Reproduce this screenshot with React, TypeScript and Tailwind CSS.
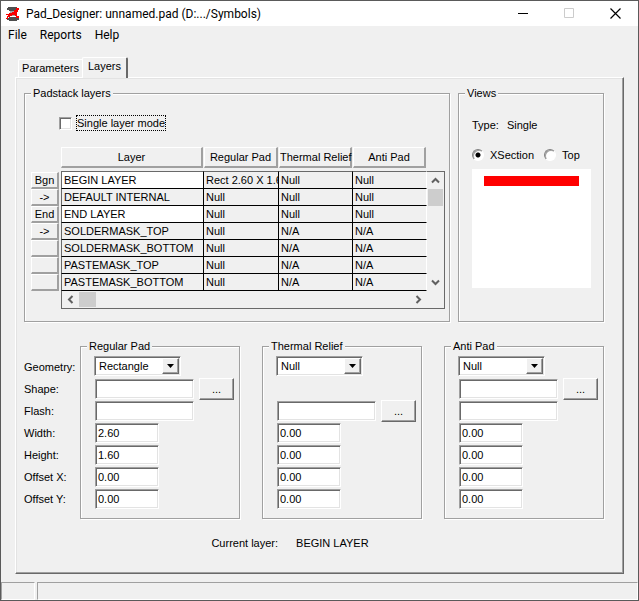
import React from 'react';
import clsx from 'clsx';

const layers = [
  { mark: 'Bgn', name: 'BEGIN LAYER', regular: 'Rect 2.60 X 1.6', thermal: 'Null', anti: 'Null', editable: true },
  { mark: '->', name: 'DEFAULT INTERNAL', regular: 'Null', thermal: 'Null', anti: 'Null' },
  { mark: 'End', name: 'END LAYER', regular: 'Null', thermal: 'Null', anti: 'Null', editable: true },
  { mark: '->', name: 'SOLDERMASK_TOP', regular: 'Null', thermal: 'N/A', anti: 'N/A' },
  { mark: '', name: 'SOLDERMASK_BOTTOM', regular: 'Null', thermal: 'N/A', anti: 'N/A' },
  { mark: '', name: 'PASTEMASK_TOP', regular: 'Null', thermal: 'N/A', anti: 'N/A' },
  { mark: '', name: 'PASTEMASK_BOTTOM', regular: 'Null', thermal: 'N/A', anti: 'N/A' },
];

const fields = ['Geometry', 'Shape', 'Flash', 'Width', 'Height', 'Offset X', 'Offset Y'];

const sunken =
  'border border-t-[#a0a0a0] border-l-[#a0a0a0] border-r-white border-b-white bg-white shadow-[inset_1px_1px_0_#696969,inset_-1px_-1px_0_#e3e3e3]';
const raised =
  'border border-t-white border-l-white border-r-[#696969] border-b-[#696969] bg-[#f0f0f0] shadow-[inset_-1px_-1px_0_#a0a0a0]';
const flatRaised =
  'block w-full border-t border-l border-r-2 border-b-2 border-t-white border-l-white border-r-[#a0a0a0] border-b-[#a0a0a0] bg-[#f0f0f0] text-center whitespace-nowrap';

const Group = ({ title, className, children }: { title: string; className?: string; children: React.ReactNode }) => (
  <fieldset
    className={clsx('min-w-0 border border-[#a0a0a0] shadow-[1px_1px_0_#fff,inset_1px_1px_0_#fff]', className)}
  >
    <legend className="ml-1.5 h-3.5 bg-[#f0f0f0] px-0.5 leading-3.5">{title}</legend>
    {children}
  </fieldset>
);

const Chevron = ({ d }: { d: string }) => (
  <svg width="9" height="9" viewBox="0 0 9 9" fill="none" stroke="#606060" strokeWidth="2">
    <path d={d} />
  </svg>
);

const PadGroup = ({
  title,
  id,
  geometry,
  width = '0.00',
  height = '0.00',
  shape = true,
}: {
  title: string;
  id: string;
  geometry: string;
  width?: string;
  height?: string;
  shape?: boolean;
}) => {
  const browse = (
    <button className={clsx('h-[22px] w-[35px] shrink-0', raised)} aria-label={`Browse ${title}`}>
      ...
    </button>
  );

  return (
    <Group title={title} className="flex-1">
      <div className="pt-[3px] pb-2 pl-3.5">
        <div className="flex h-[22px] items-start">
          <div className={clsx('relative -ml-px h-5 w-[87px]', sunken)}>
            <select
              id={`${id}-Geometry`}
              aria-label={`${title} geometry`}
              className="h-full w-full appearance-none pl-1 outline-none"
              defaultValue={geometry}
            >
              <option>Null</option>
              <option>Circle</option>
              <option>Square</option>
              <option>Rectangle</option>
            </select>
            <span
              className={clsx(
                'pointer-events-none absolute top-px right-px bottom-px flex w-[17px] items-center justify-center',
                raised
              )}
            >
              <svg width="7" height="4" viewBox="0 0 7 4">
                <path d="M0 0h7L3.5 4z" />
              </svg>
            </span>
          </div>
        </div>
        <div className="flex h-[22px] items-center gap-[5px]">
          {shape && (
            <>
              <input id={`${id}-Shape`} aria-label={`${title} shape`} className={clsx('h-5 w-[99px] px-1', sunken)} />
              {browse}
            </>
          )}
        </div>
        <div className="flex h-[22px] items-center gap-[5px]">
          <input id={`${id}-Flash`} aria-label={`${title} flash`} className={clsx('h-5 w-[99px] px-1', sunken)} />
          {!shape && browse}
        </div>
        {[width, height, '0.00', '0.00'].map((value, i) => (
          <div key={fields[i + 3]} className="flex h-[22px] items-center">
            <input
              id={`${id}-${fields[i + 3]}`}
              aria-label={`${title} ${fields[i + 3]}`}
              className={clsx('h-5 w-16 px-0.5', sunken)}
              defaultValue={value}
            />
          </div>
        ))}
      </div>
    </Group>
  );
};

const TitleBar = () => (
  <header className="flex h-[25px] items-center bg-white pl-1 font-['Roboto',sans-serif]">
    <svg width="16" height="16" viewBox="0 0 16 16" shapeRendering="crispEdges">
      <path d="M3 1h9v1h2v2h-2v1H4V4H2V2h1z" fill="#4d4d4d" />
      <path d="M5 5h6v5H5z" fill="#a6a6a6" />
      <path d="M4 11h8v1h2v2h-2v1H4v-1H2v-2h2z" fill="#4d4d4d" />
      <path
        d="M11 2h3v2h-1v2h-1v4h2v2h-3v-2h-1V9H7v1H5v1H3v2H1v-1h1v-2h1V9H1V8h3V7h3V6h2V4h2z"
        fill="#f80000"
      />
    </svg>
    <h1 className="ml-[5px] flex-1 text-xs leading-4 whitespace-nowrap">Pad_Designer: unnamed.pad (D:.../Symbols)</h1>
    <button className="flex h-full w-[46px] items-center justify-center" aria-label="Minimize">
      <svg width="11" height="11" viewBox="0 0 11 11">
        <path d="M0 5h10v1H0z" />
      </svg>
    </button>
    <button className="flex h-full w-[46px] items-center justify-center" aria-label="Maximize" disabled>
      <svg width="11" height="11" viewBox="0 0 11 11" fill="none" stroke="#ccc">
        <path d="M.5.5h9v9h-9z" />
      </svg>
    </button>
    <button className="flex h-full w-[46px] items-center justify-center" aria-label="Close">
      <svg width="11" height="11" viewBox="0 0 11 11" fill="none" stroke="#000" strokeWidth="1.200">
        <path d="M.5.5l10 10M10.500.5l-10 10" />
      </svg>
    </button>
  </header>
);

const LayerTable = () => (
  <table className="w-full table-fixed border-separate border-spacing-0 text-left">
    <colgroup>
      <col className="w-[30px]" />
      <col />
      <col className="w-[75px]" />
      <col className="w-[74px]" />
      <col className="w-[74px]" />
      <col className="w-[18px]" />
    </colgroup>
    <thead>
      <tr>
        <td />
        {['Layer', 'Regular Pad', 'Thermal Relief', 'Anti Pad'].map((title) => (
          <th key={title} className="h-6 p-0 pr-px align-top font-normal">
            <button className={clsx('h-[21px]', flatRaised)}>{title}</button>
          </th>
        ))}
        <td />
      </tr>
    </thead>
    <tbody>
      {layers.map((layer, i) => {
        const cell = clsx(
          'overflow-hidden border-r border-b border-black p-0 pl-0.5 leading-4 whitespace-nowrap',
          i === 0 && 'border-t border-t-[#696969]'
        );
        return (
          <tr key={layer.name}>
            <td className="p-0 pr-0.5">
              <button className={clsx('h-[17px] leading-3.5', flatRaised)} aria-label={`Select ${layer.name}`}>
                {layer.mark}
              </button>
            </td>
            <td className={clsx(cell, 'border-l border-l-[#696969]', layer.editable && 'bg-white')}>{layer.name}</td>
            <td className={cell}>{layer.regular}</td>
            <td className={cell}>{layer.thermal}</td>
            <td className={clsx(cell, 'border-r-white')}>{layer.anti}</td>
            {i === 0 && (
              <td rowSpan={7} className="h-px border-t border-r border-[#696969] p-0 align-top">
                <div className="flex h-[119px] flex-col items-center">
                  <button className="flex h-[17px] w-full items-center justify-center" aria-label="Scroll up">
                    <Chevron d="M1 6.500l3.500-3.500 3.500 3.500" />
                  </button>
                  <div className="h-[17px] w-[15px] bg-[#cdcdcd]" />
                  <div className="flex-1" />
                  <button className="flex h-[17px] w-full items-center justify-center" aria-label="Scroll down">
                    <Chevron d="M1 2.500l3.500 3.500 3.500-3.500" />
                  </button>
                </div>
              </td>
            )}
          </tr>
        );
      })}
    </tbody>
    <tfoot>
      <tr>
        <td />
        <td colSpan={5} className="border-r border-b border-l border-[#696969] p-0">
          <div className="flex h-[17px] items-center pr-[17px]">
            <button className="flex h-full w-[17px] items-center justify-center" aria-label="Scroll left">
              <Chevron d="M6.500 1L3 4.500 6.500 8" />
            </button>
            <div className="h-[15px] w-[17px] bg-[#cdcdcd]" />
            <div className="flex-1" />
            <button className="flex h-full w-[17px] items-center justify-center" aria-label="Scroll right">
              <Chevron d="M2.500 1L6 4.500 2.500 8" />
            </button>
          </div>
        </td>
      </tr>
    </tfoot>
  </table>
);

const radio =
  'h-3 w-3 appearance-none rounded-full border border-t-[#808080] border-l-[#808080] border-r-white border-b-white bg-white shadow-[inset_1px_1px_0_#a0a0a0] checked:bg-[radial-gradient(circle,#000_2px,#fff_3px)]';

const App = () => {
  return (
    <div className="flex min-h-screen flex-col border border-[#5a5a5a] bg-[#f0f0f0] font-['Liberation_Sans',Arial,sans-serif] text-[11px] text-black">
      <TitleBar />

      <nav className="flex gap-[13px] px-[7px] pt-px font-['Roboto',sans-serif] text-xs leading-4">
        <button>File</button>
        <button>Reports</button>
        <button>Help</button>
      </nav>

      <main className="flex flex-1 flex-col px-3.5 pt-3.5 pb-2">
        {/* Tabs */}
        <div className="flex items-end pl-[3px]" role="tablist">
          <button
            role="tab"
            aria-selected="false"
            className="h-[18px] w-16 rounded-tl-xs border-t border-l border-white whitespace-nowrap"
          >
            Parameters
          </button>
          <button
            role="tab"
            aria-selected="true"
            className="z-10 -mb-px h-[21px] w-[46px] rounded-t-xs border-t border-r-2 border-l border-t-white border-r-[#696969] border-l-white bg-[#f0f0f0] pb-1"
          >
            Layers
          </button>
        </div>

        <div className="flex-1 border border-t-white border-r-[#696969] border-b-[#696969] border-l-white pt-2 pr-[19px] pb-5 pl-2 shadow-[inset_-1px_-1px_0_#a0a0a0,inset_1px_1px_0_#e3e3e3]">
          <div className="flex gap-2">
            <Group title="Padstack layers" className="flex-1">
              <div className="pr-1 pb-3 pl-1.5">
                <div className="mt-[15px] mb-4 ml-7 flex items-center gap-1">
                  <input id="single" type="checkbox" className={clsx('h-[13px] w-[13px] appearance-none', sunken)} />
                  <label htmlFor="single" className="border border-dotted border-black leading-3.5">
                    Single layer mode
                  </label>
                </div>
                <LayerTable />
              </div>
            </Group>

            <Group title="Views" className="w-[146px] shrink-0">
              <div className="pl-[13px]">
                <div className="mt-[17px] flex gap-2 leading-4">
                  <span>Type:</span>
                  <span>Single</span>
                </div>
                <div className="mt-3.5 flex items-center leading-4">
                  <input id="xsection" name="view" type="radio" defaultChecked className={radio} />
                  <label htmlFor="xsection" className="ml-1.5">
                    XSection
                  </label>
                  <input id="top" name="view" type="radio" className={clsx('ml-2.5', radio)} />
                  <label htmlFor="top" className="ml-1.5">
                    Top
                  </label>
                </div>
                <div className="mt-1.5 h-[119px] w-[119px] bg-white px-3 pt-[7px]">
                  <div className="h-2.5 bg-[#ff0000]" />
                </div>
              </div>
            </Group>
          </div>

          <div className="mt-[17px] flex">
            <div className="w-14 shrink-0 pt-[17px]">
              {fields.map((field) => (
                <label key={field} htmlFor={`regular-${field}`} className="block leading-[22px] whitespace-nowrap">
                  {field}:
                </label>
              ))}
            </div>
            <div className="flex flex-1 gap-[22px]">
              <PadGroup title="Regular Pad" id="regular" geometry="Rectangle" width="2.60" height="1.60" />
              <PadGroup title="Thermal Relief" id="thermal" geometry="Null" shape={false} />
              <PadGroup title="Anti Pad" id="anti" geometry="Null" />
            </div>
          </div>

          <div className="mt-4 flex justify-center gap-[18px] pr-12 leading-4">
            <span>Current layer:</span>
            <span>BEGIN LAYER</span>
          </div>
        </div>
      </main>

      <footer className="flex h-[18px] gap-0.5">
        <div className="w-[34px] border border-t-[#a0a0a0] border-r-white border-b-white border-l-[#a0a0a0]" />
        <div className="flex-1 border border-t-[#a0a0a0] border-r-white border-b-white border-l-[#a0a0a0]" />
      </footer>
    </div>
  );
};

export default App;
